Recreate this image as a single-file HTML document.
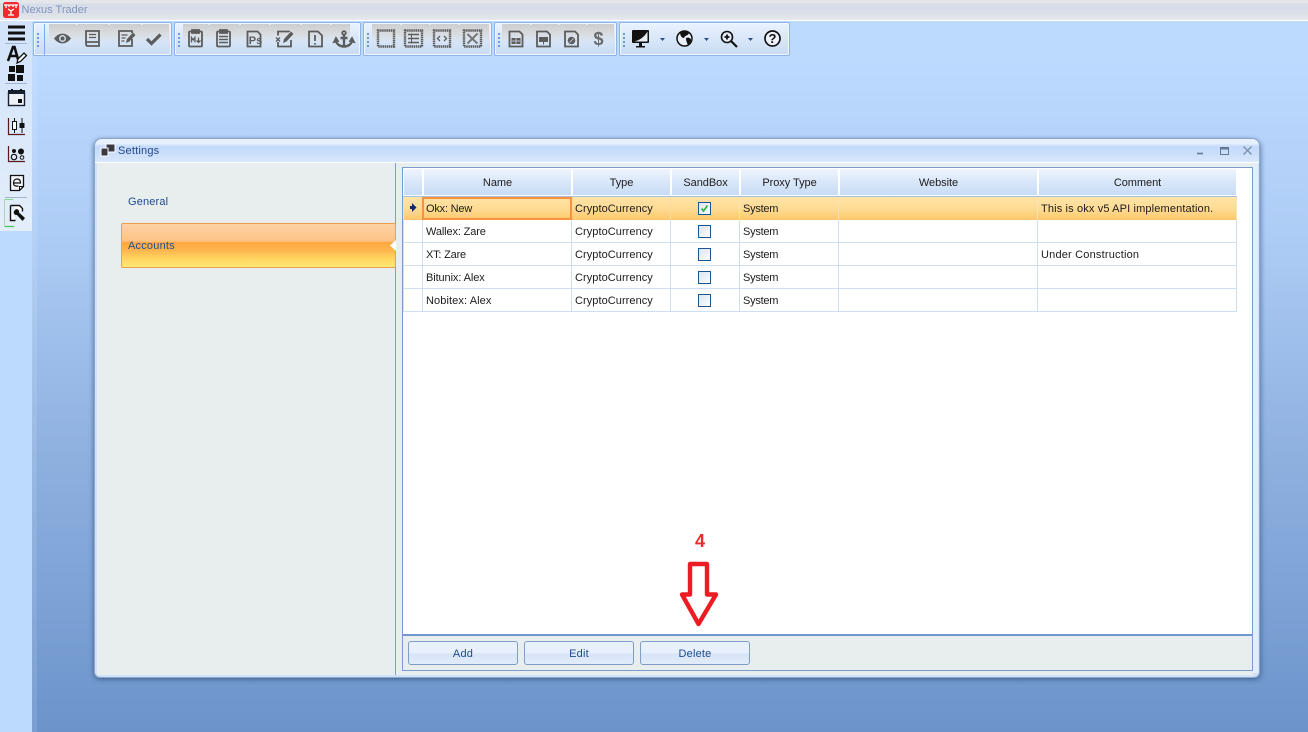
<!DOCTYPE html>
<html><head><meta charset="utf-8"><style>
html,body{margin:0;padding:0;width:1308px;height:732px;overflow:hidden}
body{position:relative;background:linear-gradient(180deg,#bcd9fe 0,#bcd9fe 60px,#aecdf6 230px,#8fb1e0 450px,#6c94cb 732px);font-family:"Liberation Sans",sans-serif;font-size:11px}
div,span,svg{position:absolute;box-sizing:border-box}
.t{white-space:nowrap;color:#1c1c1c;letter-spacing:-.1px;line-height:14px}
.c{letter-spacing:.06px}
.s{letter-spacing:-.25px}
.g{top:22px;height:34px;border:1px solid #8fb3e6;border-radius:2px;background:linear-gradient(180deg,#eaf2fe 0,#dce9fa 40%,#c9dcf4 100%);box-shadow:inset 0 0 0 1px #f2f7ff}
.gray{top:1px;height:19px;background:linear-gradient(180deg,#cdcdcd 0,#d8dadd 45%,rgba(214,226,242,0) 100%)}
.grip{top:10px;width:2px;height:14px;background:repeating-linear-gradient(180deg,#6d9be0 0,#6d9be0 2px,transparent 2px,transparent 4px)}
.th{top:168px;height:28px;background:linear-gradient(180deg,#f0f5fd 0,#dbe8fa 45%,#c8dcf6 100%);border:1px solid #fff;text-align:center;line-height:28px;color:#1c1c1c;letter-spacing:-.05px;font-size:11px}
.v{top:197px;width:1px;height:115px;background:#cfdff2}
.h{left:403px;width:834px;height:1px;background:#cfdff2}
.cb{left:698px;width:13px;height:13px;border:1px solid #1c5590;background:linear-gradient(135deg,#dde5ee,#fbfcfe)}
.btn{top:641px;height:24px;width:110px;border:1px solid #7f9dc6;border-radius:3px;background:linear-gradient(180deg,#e7f0fc 0,#e7f0fc 50%,#d6e4f6 54%,#e2ecfa 100%);text-align:center;line-height:24px;color:#1d4b91;letter-spacing:.2px}
</style></head><body>

<div style="left:0;top:0;width:1308px;height:20px;background:linear-gradient(180deg,#e4e6ea 0,#e4e6ea 3px,#d6dde8 4px,#dbe0e8 14px,#e6e8ec 20px)"></div>
<div style="left:0;top:20px;width:1308px;height:1px;background:#fff"></div>
<svg style="left:3px;top:2px" width="16" height="16" viewBox="0 0 16 16"><rect width="16" height="16" rx="2.5" fill="#ee2a2c"/><path d="M1 3h14M3 3v3M6 3v2M10 3v2M13 3v3M5 7l3 2 3-2M8 9v4M5 13h6" stroke="#fff" stroke-width="1.3" fill="none"/></svg>
<div class="t" style="left:21.500px;top:3px;font-size:11px;color:#7f93bf;letter-spacing:0">Nexus Trader</div>

<div style="left:0;top:21px;width:32px;height:711px;background:#bcd9fe"></div>
<div style="left:32px;top:57px;width:5px;height:675px;background:rgba(255,255,255,.1)"></div>
<div style="left:0;top:21px;width:32px;height:210px;background:linear-gradient(180deg,#d2e3fa 0,#dae8fa 50%,#e4eefb 100%)"></div>

<svg style="left:0;top:21px" width="32" height="210" viewBox="0 21 32 210">
<path d="M8 25.500h17v3H8zM8 31.500h17v3H8zM8 37.500h17v3H8z" fill="#111"/>
<path d="M5 43.500h22M5 83.500h22M5 197.500h22" stroke="#a3b5cc" stroke-width="1"/>
<path d="M8 61L13 47h1.500L18.500 61M10 56h7" stroke="#111" stroke-width="2.600" fill="none"/>
<path d="M17 63l1-4 6-6 2.500 2.500-6 6z" fill="#fff" stroke="#111" stroke-width="1.300"/>
<path d="M9 66h6v6H9zM16 65h8v8h-8zM8 74h7v7H8zM17 75h6v6h-6z" fill="#111"/>
<rect x="8.500" y="92.500" width="16" height="13" fill="#eef3fa" stroke="#172030" stroke-width="1.400"/><path d="M8 90h17v4H8z" fill="#172030"/><path d="M11 89h2v2h-2zM20 89h2v2h-2zM18 99h4v4h-4z" fill="#111"/>
<path d="M8.500 118v16.500H25" stroke="#5a1818" stroke-width="1.200" fill="none"/>
<path d="M14.500 118v15M22 118v15" stroke="#111"/><rect x="12.500" y="121.500" width="4" height="8" fill="#fff" stroke="#111"/><rect x="19.500" y="123" width="5" height="5" fill="#111"/>
<path d="M8.500 146v15.500H25" stroke="#5a1818" stroke-width="1.200" fill="none"/><circle cx="14" cy="151" r="2" fill="#111"/><circle cx="21" cy="151.500" r="3" fill="#111"/><circle cx="14" cy="157" r="2.700" fill="none" stroke="#111" stroke-width="1.200"/><circle cx="22" cy="157.500" r="1.800" fill="none" stroke="#111"/>
<path d="M10.500 175.500h13v11l-4 4h-9z" fill="#f5f8fc" stroke="#111" stroke-width="1.300"/><path d="M13.500 183h7c0-3-1.500-4-3.500-4s-3.500 1.500-3.500 4 1.500 3.500 5 3" fill="none" stroke="#111" stroke-width="1.200"/><path d="M19.500 190.500v-4h4" fill="none" stroke="#111"/>
<path d="M10.500 205.500h9l3 3v3M10.500 205.500v15h5" fill="#fff" stroke="#111" stroke-width="1.400"/><path d="M15 210c2-2 4.500 0 4 2.500l6 5.500-2.500 3-5.500-6c-3 .5-4.500-3-2-5z" fill="#111"/>
<path d="M12 199.500H4.500v27H14" fill="none" stroke="#b5d2b8"/><path d="M5 226.500h9" stroke="#3fca54" stroke-width="1.200"/><path d="M5 199.500h8" stroke="#86d68f"/>
</svg>

<div class="g" style="left:33px;width:139px"><div class="grip" style="left:3px"></div><div style="left:10px;top:1px;width:1px;height:31px;background:#7faae8"></div><div class="gray" style="left:15px;width:120px"></div></div>
<div class="g" style="left:174px;width:187px"><div class="grip" style="left:3px"></div><div class="gray" style="left:8px;width:167px"></div></div>
<div class="g" style="left:363px;width:129px"><div class="grip" style="left:3px"></div><div class="gray" style="left:8px;width:117px"></div></div>
<div class="g" style="left:494px;width:123px"><div class="grip" style="left:3px"></div><div class="gray" style="left:7px;width:112px"></div></div>
<div class="g" style="left:619px;width:171px"><div class="grip" style="left:3px"></div></div>

<svg style="left:0;top:20px" width="800" height="40" viewBox="0 20 800 40">
<g fill="#eef3fb"><path d="M74.500 23l2 2.500 2-2.500zM107 23l2 2.500 2-2.500zM140 23l2 2.500 2-2.500zM207 23l2 2.500 2-2.500zM238 23l2 2.500 2-2.500zM268 23l2 2.500 2-2.500zM299 23l2 2.500 2-2.500zM329 23l2 2.500 2-2.500zM399 23l2 2.500 2-2.500zM428 23l2 2.500 2-2.500zM457 23l2 2.500 2-2.500zM529 23l2 2.500 2-2.500zM557 23l2 2.500 2-2.500zM585 23l2 2.500 2-2.500z"/></g>
<g fill="none" stroke="#5c5c5c" stroke-width="1.800">
<path d="M54 38.500c5-6.500 12-6.500 17 0-5 6.500-12 6.500-17 0z" fill="#5c5c5c" stroke="none"/><circle cx="62.500" cy="38.500" r="3.500" fill="#cfdcee" stroke="none"/><circle cx="62.500" cy="38.500" r="2" fill="#5c5c5c" stroke="none"/>
<path d="M86 31h13v15H88c-1.500 0-2-1-2-2z"/><path d="M86 43.500c0-1 1-1.500 2-1.500h11" /><path d="M89 34.500h7M89 37.500h7" stroke-width="1.300"/>
<path d="M132 33v-2h-13v15h13v-7"/><path d="M121.500 35h6M121.500 38h4M121.500 41h3" stroke-width="1.300"/><path d="M126 43l1-4 6-6.500 2.500 2.500-6 6.500z" fill="#5c5c5c" stroke="none"/>
<path d="M147 39l4.500 4.500 9-9" stroke-width="3.200"/>
<rect x="189" y="31.500" width="13" height="15" rx="1"/><path d="M192 30h7v3h-7z" fill="#5c5c5c"/><path d="M191.500 42.500v-5l1.700 2.500 1.700-2.500v5M198.500 37.500v4.500m-2-1.500l2 2 2-2" stroke-width="1.300"/>
<rect x="217" y="31.500" width="13" height="15" rx="1"/><path d="M220 30h7v3h-7z" fill="#5c5c5c"/><path d="M219 36.500h9M219 39.500h9M219 42.500h9" stroke-width="1.600"/>
<path d="M247.500 31.500h10l3 3v12h-13z"/><text x="248.800" y="44" font-family="Liberation Sans" font-size="11" font-weight="700" fill="#5c5c5c" stroke="none">Ps</text>
<path d="M289 32v-.5h-11v4M278 42v4.500h13V40"/><path d="M276 37.500l4 4m0-4l-4 4" stroke-width="1.300"/><path d="M283 43l1-4 7-7.500 2.500 2.500-7 7.500z" fill="#5c5c5c" stroke="none"/>
<path d="M309 31.500h9l4 4v11h-13z"/><path d="M315 35v6M315 43v1.500" stroke-width="1.800"/>
<circle cx="344" cy="33" r="1.800"/><path d="M344 35v11.500M340.500 38h7M336 40c0 4 4 6.500 8 6.500s8-2.500 8-6.500" stroke-width="2.400"/><path d="M334 42l2-4 2 3zM354 42l-2-4-2 3z" fill="#5c5c5c"/>
<g stroke-dasharray="1.500 .6" stroke-width="2.400"><rect x="378" y="30.500" width="16" height="16"/><rect x="405" y="30.500" width="17" height="16"/><rect x="434" y="30.500" width="16" height="16"/><rect x="464" y="30.500" width="17" height="16"/></g>
<path d="M408 34.500h11M408 38.500h11M408 42.500h11" stroke-width="1.600"/><path d="M411.500 33.500v10" stroke-width="1"/>
<path d="M440 36l-2.500 2.500 2.500 2.500M444 36l2.500 2.500-2.500 2.500" stroke-width="1.300"/>
<path d="M467.500 34l4 4 1 1 5 4.500m0-10l-10 10" stroke-width="2" stroke="#777"/>
<path d="M509.500 31.500h10l3 3v12h-13z"/><rect x="511.500" y="38" width="9" height="6" fill="#5c5c5c" stroke="none"/><path d="M512 41h8M516 38v6" stroke="#d5e2f3" stroke-width=".7"/>
<path d="M537 31.500h10l3 3v12h-13z"/><rect x="539" y="37" width="9" height="5" fill="#5c5c5c" stroke="none"/><path d="M543.500 42v2.500" stroke-width="1"/>
<path d="M565 31.500h10l3 3v12h-13z"/><circle cx="571.500" cy="40.500" r="3.800" fill="#5c5c5c" stroke="none"/><path d="M569.500 42.500l4-4" stroke="#d5e2f3" stroke-width=".8"/>
</g>
<text x="593.500" y="45" font-family="Liberation Sans" font-size="18" font-weight="700" fill="#6a6a6a">$</text>
<rect x="632" y="30" width="17" height="13" fill="#111" rx="1"/><path d="M634 41.500c5-1 10-4 13.500-10v10z" fill="#e8eef8"/><path d="M636 46h9v1.500h-9zM639 43h3v3h-3z" fill="#111"/>
<circle cx="684.500" cy="38.500" r="7.500" fill="#e8eff9" stroke="#111" stroke-width="1.500"/><path d="M680 32c3-1.500 7-2 9 1-1 3-4 2-5 5-2 0-4-2-4-6zM686 38c2-1 5 0 5 2 0 3-2 4-3 5-1-2-2-4-2-7z" fill="#111"/>
<circle cx="727" cy="37" r="5.500" fill="#e8eff9" stroke="#111" stroke-width="1.600"/><path d="M724.500 37h5M727 34.500v5" stroke="#111" stroke-width="1.800"/><path d="M731 41l6 6" stroke="#111" stroke-width="2.200"/>
<circle cx="772.500" cy="38.500" r="7.500" fill="#eef3fb" stroke="#111" stroke-width="1.700"/><text x="772.500" y="43" text-anchor="middle" font-family="Liberation Sans" font-size="13" font-weight="700" fill="#111">?</text>
<path d="M660 38h5l-2.500 3zM704 38h5l-2.500 3zM748 38h5l-2.500 3z" fill="#2a4f8a"/>
</svg>

<div style="left:94px;top:138px;width:1166px;height:540px;border-radius:8px 8px 6px 6px;border:1px solid #8ea7c8;background:#cfe2fb;box-shadow:-1px 1px 4px rgba(50,80,125,.5),2px 2px 5px rgba(50,80,125,.35)"></div>
<div style="left:95px;top:139px;width:1164px;height:23px;border-radius:7px 7px 0 0;background:linear-gradient(180deg,#eaf3fe 0,#e4f0fe 20%,#c4dafc 32%,#cadefb 60%,#d8e7fc 100%)"></div>
<div style="left:95px;top:162px;width:1164px;height:1px;background:#fff"></div>
<div style="left:1252px;top:163px;width:6px;height:510px;background:#e3eefb"></div>
<svg style="left:100px;top:143px" width="16" height="14" viewBox="0 0 16 14"><rect x="6" y="1" width="9" height="8" fill="#3a3a44" stroke="#fff"/><rect x="1" y="5" width="7" height="8" fill="#3a3a44" stroke="#fff"/></svg>
<div class="t" style="left:118px;top:144px;color:#1f4787;letter-spacing:.2px;font-size:11px">Settings</div>
<svg style="left:1190px;top:142px" width="65" height="16" viewBox="0 0 65 16" fill="none" stroke="#66788f"><path d="M7 11.500h6" stroke-width="1.600"/><rect x="30.500" y="5.500" width="8" height="7"/><path d="M30 6.500h9" stroke-width="2"/><path d="M53.500 4.500l8 8m0-8l-8 8" stroke="#7e8ea5" stroke-width="1.300"/></svg>

<div style="left:97px;top:163px;width:299px;height:512px;background:#e8eeee"></div>
<div style="left:395px;top:163px;width:1px;height:512px;background:#7f9fce"></div>
<div style="left:396px;top:163px;width:857px;height:512px;background:#e8eeee"></div>
<div class="t" style="left:128px;top:195px;color:#1e4a8e;letter-spacing:.15px">General</div>
<div style="left:121px;top:223px;width:275px;height:45px;border:1px solid #ee9f4d;border-radius:2px;background:linear-gradient(180deg,#fdd3a5 0,#fdc284 40%,#fea63f 43%,#fdb44c 60%,#ffd560 80%,#fee874 100%)"></div>
<div class="t" style="left:128px;top:239px;color:#24508f;letter-spacing:.2px">Accounts</div>
<svg style="left:390px;top:240px" width="6" height="11" viewBox="0 0 6 11"><path d="M6 0v11L0 5.500z" fill="#fff"/></svg>

<div style="left:402px;top:167px;width:851px;height:504px;border:1px solid #789dcc;background:#fff"></div>
<div style="left:403px;top:634px;width:849px;height:2px;background:#6f99cf"></div>
<div style="left:403px;top:636px;width:849px;height:34px;background:#e8eeee"></div>

<div class="th" style="left:403px;width:20px"></div>
<div class="th" style="left:423px;width:149px">Name</div>
<div class="th" style="left:572px;width:99px">Type</div>
<div class="th" style="left:671px;width:69px">SandBox</div>
<div class="th" style="left:740px;width:99px">Proxy Type</div>
<div class="th" style="left:839px;width:199px">Website</div>
<div class="th" style="left:1038px;width:199px">Comment</div>
<div style="left:403px;top:196px;width:834px;height:1px;background:#a9c0dd"></div>

<div style="left:403px;top:197px;width:834px;height:23px;background:linear-gradient(180deg,#ffe3a6 0,#fedc95 50%,#fdca6e 95%,#fbc26c 100%)"></div>

<div class="h" style="top:242px"></div><div class="h" style="top:265px"></div><div class="h" style="top:288px"></div><div class="h" style="top:311px"></div>
<div class="v" style="left:422px"></div><div class="v" style="left:571px"></div><div class="v" style="left:670px"></div><div class="v" style="left:739px"></div><div class="v" style="left:838px"></div><div class="v" style="left:1037px"></div><div class="v" style="left:1236px"></div><div class="v" style="left:403px"></div>
<div style="left:670px;top:197px;width:1px;height:23px;background:#fbd9a0"></div><div style="left:739px;top:197px;width:1px;height:23px;background:#fbe2b4"></div><div style="left:838px;top:197px;width:1px;height:23px;background:#fbe2b4"></div><div style="left:1037px;top:197px;width:1px;height:23px;background:#fbe2b4"></div><div style="left:1236px;top:197px;width:1px;height:23px;background:#fbe2b4"></div><div style="left:403px;top:197px;width:1px;height:23px;background:#fbe2b4"></div>
<div style="left:422px;top:197px;width:150px;height:23px;border:2px solid #f9913f"></div>
<svg style="left:409px;top:203px" width="8" height="9" viewBox="0 0 8 9"><path d="M1 3h2V0l4.500 4.500L3 9V6H1z" fill="#0e2a63"/></svg>

<div class="t" style="left:426px;top:202px;letter-spacing:-.2px">Okx: New</div><div class="t c" style="left:575px;top:202px">CryptoCurrency</div><div class="t s" style="left:743px;top:202px">System</div><div class="t" style="left:1041px;top:202px;letter-spacing:.14px">This is okx v5 API implementation.</div>
<div class="t" style="left:426px;top:225px;letter-spacing:-.13px">Wallex: Zare</div><div class="t c" style="left:575px;top:225px">CryptoCurrency</div><div class="t s" style="left:743px;top:225px">System</div>
<div class="t" style="left:426px;top:248px;letter-spacing:-.2px">XT: Zare</div><div class="t c" style="left:575px;top:248px">CryptoCurrency</div><div class="t s" style="left:743px;top:248px">System</div><div class="t" style="left:1041px;top:248px;letter-spacing:.19px">Under Construction</div>
<div class="t" style="left:426px;top:271px">Bitunix: Alex</div><div class="t c" style="left:575px;top:271px">CryptoCurrency</div><div class="t s" style="left:743px;top:271px">System</div>
<div class="t" style="left:426px;top:294px;letter-spacing:.1px">Nobitex: Alex</div><div class="t c" style="left:575px;top:294px">CryptoCurrency</div><div class="t s" style="left:743px;top:294px">System</div>

<div class="cb" style="top:202px"></div><svg style="left:700px;top:204px" width="9" height="9" viewBox="0 0 9 9"><path d="M1.500 4.500l2 2.500 4-5.500" fill="none" stroke="#35b54a" stroke-width="1.800"/></svg>
<div class="cb" style="top:225px"></div><div class="cb" style="top:248px"></div><div class="cb" style="top:271px"></div><div class="cb" style="top:294px"></div>

<div class="btn" style="left:408px">Add</div><div class="btn" style="left:524px">Edit</div><div class="btn" style="left:640px">Delete</div>

<div class="t" style="left:695px;top:531px;font-size:18px;line-height:20px;font-weight:700;color:#ee2a2e;letter-spacing:0">4</div>
<svg style="left:675px;top:558px" width="50" height="72" viewBox="675 558 50 72"><path d="M690 564h17v30.500h9L698.500 624 682 594.500h8z" fill="#fff" stroke="#ed1c24" stroke-width="4.400" stroke-linejoin="round"/></svg>
</body></html>
